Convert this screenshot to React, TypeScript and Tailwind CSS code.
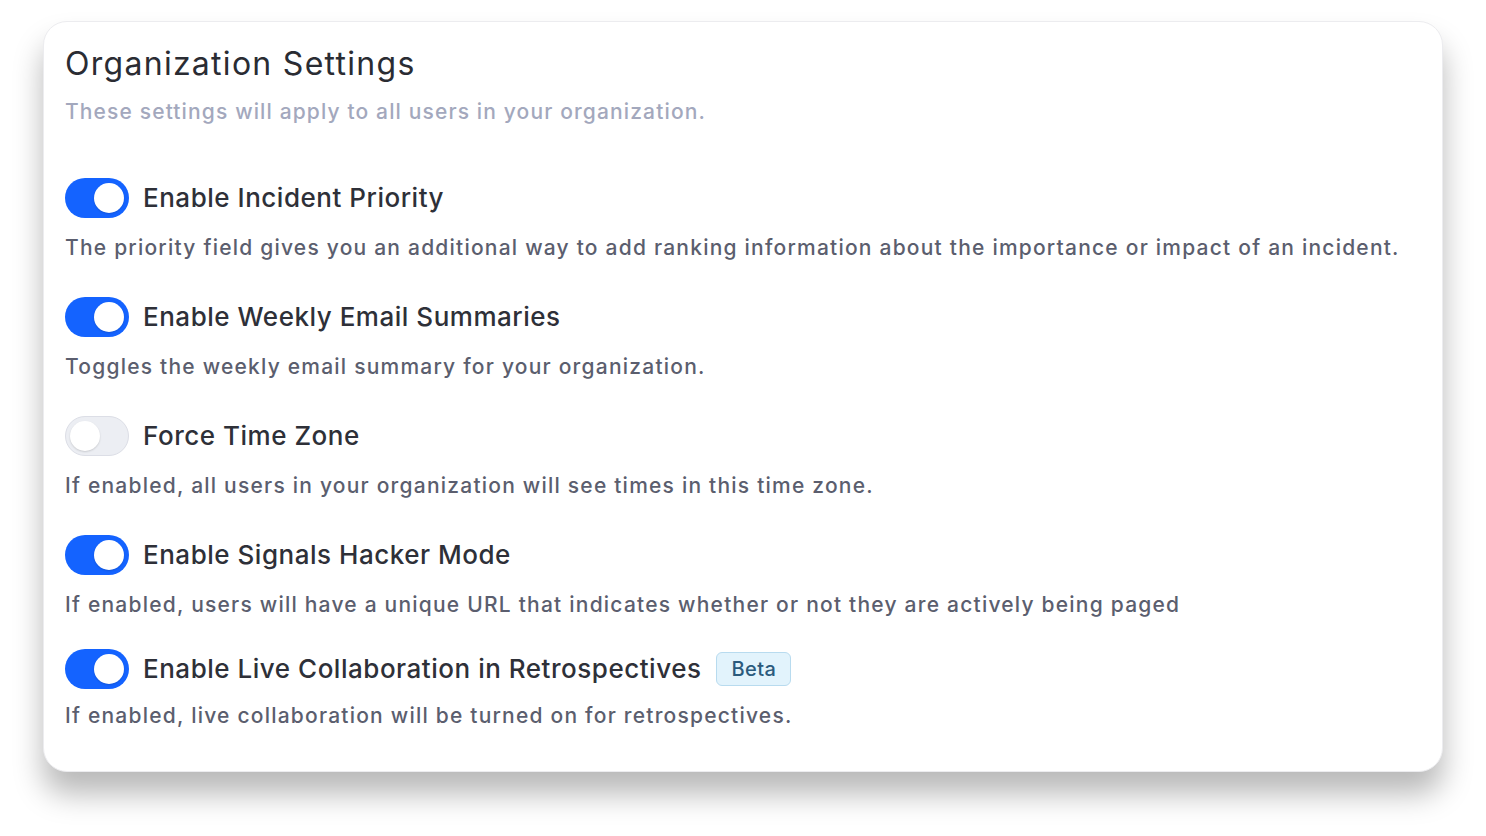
import React, { useState } from "react";

type Setting = { id: string; label: string; description: string; enabled: boolean; beta?: boolean };

const initial: Setting[] = [
  {
    id: "priority",
    label: "Enable Incident Priority",
    description:
      "The priority field gives you an additional way to add ranking information about the importance or impact of an incident.",
    enabled: true,
  },
  {
    id: "weekly",
    label: "Enable Weekly Email Summaries",
    description: "Toggles the weekly email summary for your organization.",
    enabled: true,
  },
  {
    id: "timezone",
    label: "Force Time Zone",
    description: "If enabled, all users in your organization will see times in this time zone.",
    enabled: false,
  },
  {
    id: "hacker",
    label: "Enable Signals Hacker Mode",
    description: "If enabled, users will have a unique URL that indicates whether or not they are actively being paged",
    enabled: true,
  },
  {
    id: "collab",
    label: "Enable Live Collaboration in Retrospectives",
    description: "If enabled, live collaboration will be turned on for retrospectives.",
    enabled: true,
    beta: true,
  },
];

function Toggle({ on, onClick }: { on: boolean; onClick: () => void }) {
  return (
    <button
      onClick={onClick}
      className={
        on
          ? "flex h-[40px] w-[64px] shrink-0 items-center justify-end rounded-full bg-[#1463ff] px-[5px]"
          : "flex h-[40px] w-[64px] shrink-0 items-center justify-start rounded-full border border-[#dcdee6] bg-[#eceef3] px-[4px]"
      }
    >
      <span className="h-[30px] w-[30px] rounded-full bg-white shadow-[0_1px_2px_rgba(0,0,0,0.15)]" />
    </button>
  );
}

export default function App() {
  const [settings, setSettings] = useState(initial);

  return (
    <div className="min-h-screen bg-white px-[43px] pt-[21px] font-['Inter',sans-serif]">
      <div className="h-[751px] w-[1400px] rounded-[24px] border border-[#ececef] bg-white px-[21px] pt-[20px] shadow-[0_22px_30px_rgba(0,0,0,0.28)]">
        <h1 className="text-[32px] leading-[44px] tracking-[0.04em] text-[#2a2c33]">Organization Settings</h1>
        <p className="mt-[10px] text-[21px] font-medium leading-[32px] tracking-[0.054em] text-[#a3a8bd]">
          These settings will apply to all users in your organization.
        </p>

        <div className="mt-[50px] flex flex-col">
          {settings.map((s, i) => (
            <div key={s.id} className={i === settings.length - 1 ? "mt-[28px]" : i === 0 ? "" : "mt-[33px]"}>
              <div className="flex items-center gap-[14px]">
                <Toggle
                  on={s.enabled}
                  onClick={() =>
                    setSettings((prev) => prev.map((p) => (p.id === s.id ? { ...p, enabled: !p.enabled } : p)))
                  }
                />
                <span className="text-[26px] font-medium leading-[40px] tracking-[0.02em] text-[#2e3038]">{s.label}</span>
                {s.beta && (
                  <span className="ml-[1px] rounded-[6px] border border-[#b8dbef] bg-[#e2f3fc] px-[14px] text-[20px] font-medium leading-[32px] tracking-[0.02em] text-[#2b5a7c]">
                    Beta
                  </span>
                )}
              </div>
              <p
                className={
                  i === settings.length - 1
                    ? "mt-[11px] text-[21px] font-medium leading-[32px] tracking-[0.058em] text-[#5b5e6e]"
                    : "mt-[14px] text-[21px] font-medium leading-[32px] tracking-[0.058em] text-[#5b5e6e]"
                }
              >
                {s.description}
              </p>
            </div>
          ))}
        </div>
      </div>
    </div>
  );
}
